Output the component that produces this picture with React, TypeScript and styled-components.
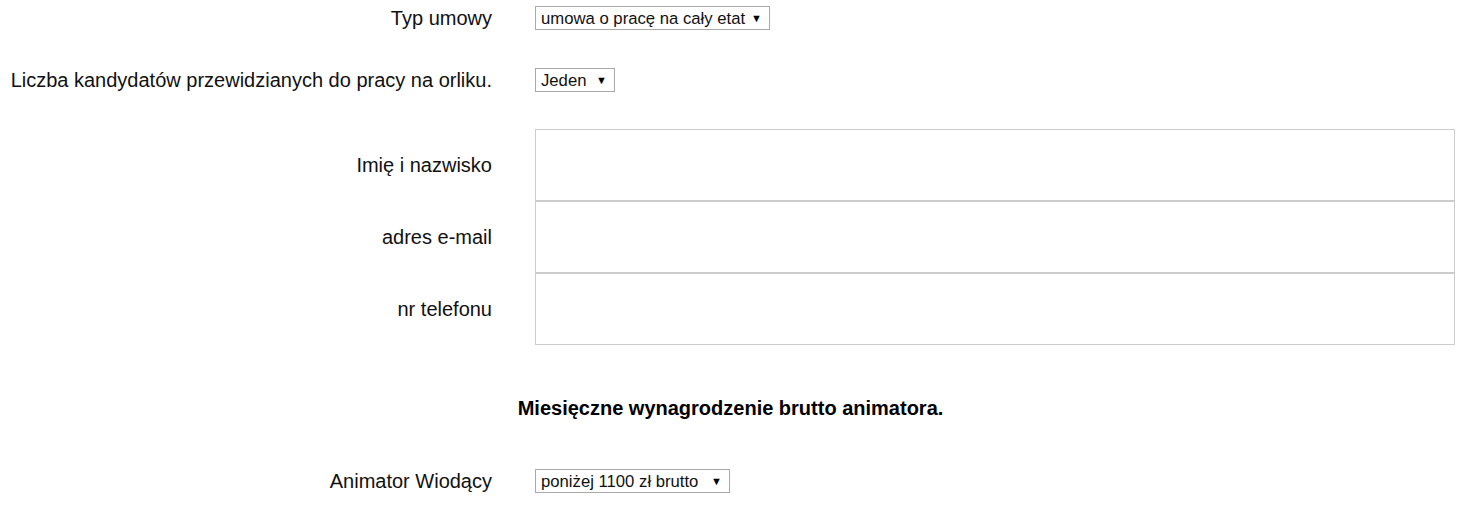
import { useState } from 'react';
import styled, { createGlobalStyle } from 'styled-components';

const GlobalStyle = createGlobalStyle`
   body {
      margin: 0;
      background: #ffffff;
      font-family: 'Liberation Sans', Arial, sans-serif;
      color: #111111;
   }
`;

const Page = styled.form`
   display: flex;
   flex-direction: column;
   padding: 6px 17px 0 0;
`;

const Row = styled.div<{ $top?: number }>`
   display: grid;
   grid-template-columns: 492px 1fr;
   column-gap: 43px;
   align-items: center;
   margin-top: ${({ $top }) => $top ?? 0}px;
`;

const Label = styled.label`
   font-size: 20px;
   line-height: 24px;
   text-align: right;
   white-space: nowrap;
`;

const Control = styled.div`
   display: flex;
   align-items: center;
`;

const SelectWrap = styled.span<{ $width: number }>`
   position: relative;
   display: block;
   width: ${({ $width }) => $width}px;
   height: 24px;
`;

const Select = styled.select`
   appearance: none;
   display: block;
   width: 100%;
   height: 100%;
   box-sizing: border-box;
   border: 1px solid #a9a9a9;
   border-radius: 0;
   background: #ffffff;
   padding: 0 22px 0 5px;
   font-family: 'Liberation Sans', Arial, sans-serif;
   font-size: 16.7px;
   color: #111111;
   outline: none;
`;

const Arrow = styled.span`
   position: absolute;
   right: 8px;
   top: 50%;
   transform: translateY(-50%);
   font-size: 11px;
   line-height: 1;
   color: #000000;
   pointer-events: none;
`;

const Fields = styled.div<{ $top: number }>`
   display: flex;
   flex-direction: column;
   margin-top: ${({ $top }) => $top}px;
`;

const Input = styled.input`
   box-sizing: border-box;
   width: 100%;
   height: 72px;
   border: 1px solid #cccccc;
   border-radius: 0;
   padding: 0 10px;
   font-family: 'Liberation Sans', Arial, sans-serif;
   font-size: 16px;
   outline: none;
`;

const FieldRow = styled(Row)`
   height: 72px;
`;

const Heading = styled.h3`
   margin: 51px 0 0 6px;
   font-size: 20px;
   line-height: 24px;
   font-weight: bold;
   text-align: center;
   color: #000000;
`;

interface IDropdown {
   width: number;
   options: string[];
   value: string;
   onChange: (v: string) => void;
}

const Dropdown = ({ width, options, value, onChange }: IDropdown) => (
   <SelectWrap $width={width}>
      <Select value={value} onChange={(e) => onChange(e.target.value)}>
         {options.map((o) => (
            <option key={o}>{o}</option>
         ))}
      </Select>
      <Arrow>▼</Arrow>
   </SelectWrap>
);

const App = () => {
   const [contract, setContract] = useState('umowa o pracę na cały etat');
   const [count, setCount] = useState('Jeden');
   const [salary, setSalary] = useState('poniżej 1100 zł brutto');

   return (
      <>
         <GlobalStyle />
         <Page onSubmit={(e) => e.preventDefault()}>
            <Row>
               <Label>Typ umowy</Label>
               <Control>
                  <Dropdown
                     width={235}
                     value={contract}
                     onChange={setContract}
                     options={['umowa o pracę na cały etat', 'umowa o pracę na pół etatu', 'umowa zlecenie']}
                  />
               </Control>
            </Row>
            <Row $top={38}>
               <Label>Liczba kandydatów przewidzianych do pracy na orliku.</Label>
               <Control>
                  <Dropdown width={80} value={count} onChange={setCount} options={['Jeden', 'Dwóch']} />
               </Control>
            </Row>
            <Fields $top={37}>
               <FieldRow>
                  <Label>Imię i nazwisko</Label>
                  <Input type={'text'} />
               </FieldRow>
               <FieldRow>
                  <Label>adres e-mail</Label>
                  <Input type={'email'} />
               </FieldRow>
               <FieldRow>
                  <Label>nr telefonu</Label>
                  <Input type={'tel'} />
               </FieldRow>
            </Fields>
            <Heading>Miesięczne wynagrodzenie brutto animatora.</Heading>
            <Row $top={49}>
               <Label>Animator Wiodący</Label>
               <Control>
                  <Dropdown
                     width={195}
                     value={salary}
                     onChange={setSalary}
                     options={['poniżej 1100 zł brutto', '1100 - 1500 zł brutto', 'powyżej 1500 zł brutto']}
                  />
               </Control>
            </Row>
         </Page>
      </>
   );
};

export default App;
